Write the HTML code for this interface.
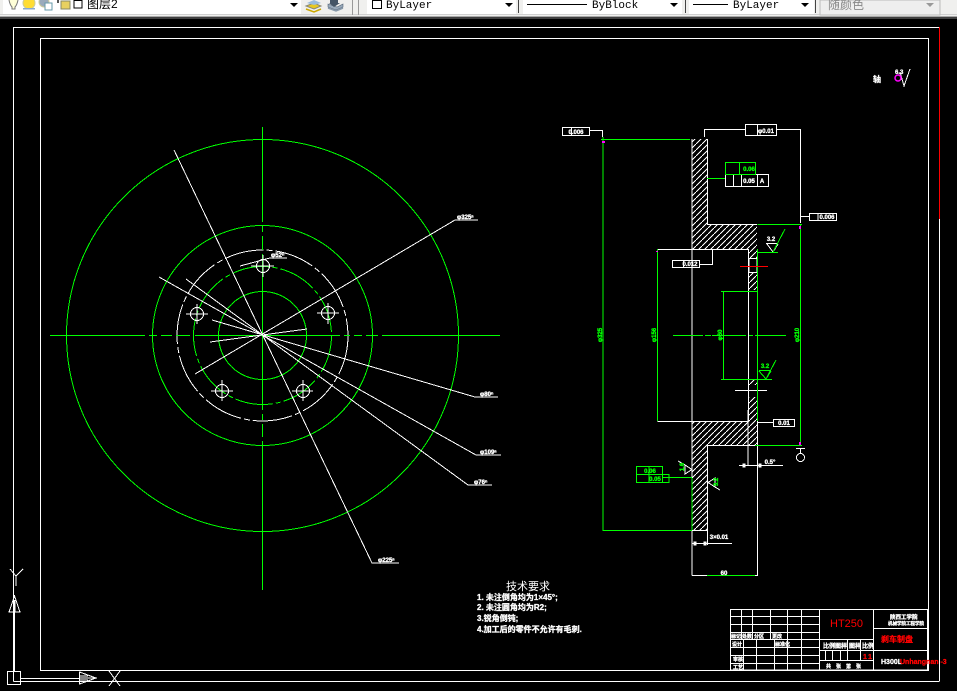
<!DOCTYPE html>
<html>
<head>
<meta charset="utf-8">
<style>
html,body{margin:0;padding:0;width:957px;height:691px;overflow:hidden;background:#000}
svg{display:block;position:absolute;left:0;top:0}
text{font-family:"Liberation Sans","Noto Sans CJK SC",sans-serif}
.m{font-family:"Liberation Mono","Noto Sans CJK SC",monospace;font-size:11px;fill:#000}
.w{stroke:#fff;fill:none}
.g{stroke:#0f0;fill:none}
.d{font-size:6px;font-weight:bold;fill:#fff;stroke:#fff;stroke-width:.35}
.dg{font-size:6px;font-weight:bold;fill:#0f0;stroke:#0f0;stroke-width:.35}
.t{font-size:6px;font-weight:bold;fill:#fff;text-anchor:middle;stroke:currentColor;stroke-width:.3;color:#fff}
.tg{font-size:6px;font-weight:bold;fill:#0f0;text-anchor:middle;stroke:#0f0;stroke-width:.3}
.k{font-weight:bold;fill:#fff;stroke:#fff;stroke-width:.3}
.r{font-weight:bold;fill:#f00;stroke:#f00;stroke-width:.3}
</style>
</head>
<body>
<svg width="957" height="691" viewBox="0 0 957 691" xmlns="http://www.w3.org/2000/svg">
<defs>
<pattern id="h" patternUnits="userSpaceOnUse" width="6" height="6">
<path d="M0 6L6 0" stroke="#fff" stroke-width="1" shape-rendering="crispEdges"/>
</pattern>
</defs>
<rect width="957" height="691" fill="#000"/>

<!-- toolbar -->
<rect width="957" height="18" fill="#f0f0ee"/>
<rect y="14" width="957" height="1" fill="#d0d0d0"/>
<rect y="16" width="957" height="1" fill="#a8a8a8"/>
<rect y="17" width="957" height="2" fill="#404040"/>
<rect x="3" y="0" width="298" height="14" fill="#fff"/>
<rect x="367" y="0" width="149" height="14" fill="#fff"/>
<rect x="523" y="0" width="159" height="14" fill="#fff"/>
<rect x="689" y="0" width="125" height="14" fill="#fff"/>
<rect x="820" y="0" width="120" height="15" fill="#eee" stroke="#bbb"/>
<rect x="352" y="0" width="1" height="15" fill="#999"/>
<rect x="358" y="0" width="1" height="15" fill="#999"/>
<rect x="518" y="0" width="1" height="13" fill="#444"/>
<rect x="685" y="0" width="1" height="13" fill="#444"/>
<rect x="815" y="0" width="1" height="13" fill="#444"/>
<path d="M9 0Q10 5 12 7L12 9L15 9L15 7Q17 5 18 0" fill="#ffffd8" stroke="#777"/>
<circle cx="29" cy="3" r="6" fill="#ffdd33" stroke="#cc9"/>
<rect x="23" y="8" width="12" height="1.500" fill="#88aacc"/>
<circle cx="44" cy="2" r="5" fill="#9ab" stroke="#cc9"/>
<rect x="45" y="3" width="7" height="7" fill="#fff" stroke="#69a"/>
<rect x="57" y="0" width="2" height="3" fill="#555"/>
<rect x="61" y="1" width="9" height="8" fill="#e8d060" stroke="#886"/>
<rect x="74" y="0.500" width="8" height="7.500" fill="#fff" stroke="#000"/>
<text x="87" y="8" font-size="12" fill="#000">图层2</text>
<path d="M290 3h8l-4 4z" fill="#000"/>
<path d="M306 6l8-3 7 3-7 3z" fill="#e8c820" stroke="#887"/>
<path d="M306 9l8 3 7-3" fill="none" stroke="#cca800" stroke-width="1.500"/>
<path d="M314 0l7 3-7 2-7-2z" fill="#9bd"/>
<path d="M328 4l9 3 6-3v3l-7 3-8-3z" fill="#9ab" stroke="#567" stroke-width=".6"/>
<path d="M330 0h8v3h2l-6 4-5-4h1z" fill="#456"/>
<path d="M328 8l8 3 7-3" fill="none" stroke="#89a" stroke-width="1.500"/>
<rect x="372.500" y="0.500" width="9" height="8" fill="#fff" stroke="#000"/>
<text class="m" x="386" y="8">ByLayer</text>
<path d="M505 3h8l-4 4z" fill="#000"/>
<rect x="527" y="4" width="60" height="1" fill="#000"/>
<text class="m" x="592" y="8">ByBlock</text>
<path d="M670 3h8l-4 4z" fill="#000"/>
<rect x="693" y="4" width="35" height="1" fill="#000"/>
<text class="m" x="733" y="8">ByLayer</text>
<path d="M801 3h8l-4 4z" fill="#000"/>
<text x="828" y="9" font-size="12" fill="#888">随颜色</text>
<path d="M926 3h8l-4 4z" fill="#999"/>

<g shape-rendering="crispEdges" stroke-width="1">
<path class="w" d="M13.500 681.500V27.500H939"/>
<path class="w" d="M13.500 681.500H939"/>
<path stroke="#f00" fill="none" d="M939.500 27V219"/>
<path stroke="#fff" fill="none" d="M939.500 219V681.500"/>
<rect class="w" x="40.500" y="38.500" width="888" height="632"/>

<circle class="g" cx="262.500" cy="335.500" r="196"/>
<circle class="g" cx="262.500" cy="335.500" r="110"/>
<circle class="w" cx="262.500" cy="335.500" r="85.500" stroke-dasharray="40 3 6 3"/>
<circle class="g" cx="262.500" cy="335.500" r="69" stroke-dasharray="38 3 5 3"/>
<circle class="g" cx="262.500" cy="335.500" r="44"/>
<path class="g" d="M50 335.500H145M149 335.500H157M161 335.500H172M176 335.500H190M195 335.500H340M344 335.500H350M354 335.500H362M366 335.500H378M382 335.500H500"/>
<path class="g" d="M262.500 127V222M262.500 226V232M262.500 236V250M262.500 254V410M262.500 414V420M262.500 424V437M262.500 441V590"/>
<g class="w">
<circle cx="263" cy="266" r="6.500"/><path d="M251 266H274M263 255V277"/>
<circle cx="328" cy="313" r="6.500"/><path d="M317 313H339M328 303V324"/>
<circle cx="197" cy="314" r="6.500"/><path d="M186 314H208M197 304V324"/>
<circle cx="222" cy="391" r="6.500"/><path d="M211 391H233M222 380V401"/>
<circle cx="303" cy="391" r="6.500"/><path d="M292 391H313M303 380V401"/>
<path d="M174 150L372 563H399"/>
<path d="M195 374L455 220H478"/>
<path d="M212 320L475 397H498"/>
<path d="M159 277L476 455H501"/>
<path d="M186 279L468 485H492"/>
<path d="M210 342L307 329"/>
<path d="M240 266L270 258H287"/>
</g>
</g>
<text class="d" x="457" y="219">φ325ⁿ</text>
<text class="d" x="480" y="396">φ80ⁿ</text>
<text class="d" x="480" y="454">φ109ⁿ</text>
<text class="d" x="474" y="484">φ76ⁿ</text>
<text class="d" x="378" y="562">φ225ⁿ</text>
<text class="d" x="271" y="257">φ52ⁿ</text>

<path fill="url(#h)" d="M692 139H707.500V224.500H757V249H692Z"/>
<path fill="url(#h)" d="M749 249H757V258H749ZM749 272H757V290H749ZM749 380H757V385H749ZM749 397H757V421H749Z"/>
<path fill="url(#h)" d="M692 421H757V445H707.500V530H692Z"/>
<rect x="692" y="249.500" width="56" height="171" fill="#000"/>

<g shape-rendering="crispEdges" stroke-width="1">
<g class="w">
<path d="M692 139V575.500"/>
<path d="M707.500 139V224.500H757"/>
<path d="M657.500 249.500H748.500V421.500H657.500"/>
<path d="M757.500 421V445.500H707.500V545"/>
<path d="M692 530.500H707"/>
<path d="M757.500 445V575.500H692"/>
<path d="M692 543.500H732"/>
<rect x="749" y="258.500" width="8" height="14"/>
<path d="M735 390.500H767"/>
<path d="M757 422.500H773"/>
<rect x="773.500" y="419.500" width="21" height="7"/>
<rect x="562.500" y="127.500" width="27" height="8"/>
<path d="M571.500 127.500V135.500"/>
<path d="M589 130.500H602.500V137"/>
<rect x="745.500" y="124.500" width="31" height="11"/>
<path d="M757.500 124.500V135.500"/>
<path d="M704.500 137V129.500H745M777 129.500H800.500V223"/>
<rect x="809.500" y="213.500" width="27" height="7"/>
<path d="M800 216.500H809M818 213.500V220.500"/>
<rect x="725.500" y="174.500" width="43" height="12"/>
<path d="M733.500 174.500V186M741.500 174.500V186M757.500 174.500V186"/>
<rect x="672.500" y="260.500" width="27" height="7"/>
<path d="M683.500 260.500V267.500M700 264.500H712.500V250"/>
<path d="M766 243.500H778M767 244L773 252L778 244"/>
<path d="M796 448.500H805M800.500 449V453"/>
<circle cx="800.500" cy="457.500" r="4"/>
<path d="M739 465.500H783M748 410V465"/>
<rect x="743" y="464" width="2" height="3" fill="#fff"/>
<rect x="759" y="464" width="2" height="3" fill="#fff"/>
<rect x="694" y="542" width="2" height="3" fill="#fff"/>
<rect x="704" y="542" width="2" height="3" fill="#fff"/>
<path d="M692 469.500L685 465V474ZM685 465L678 461"/>
<path d="M708 482.500L715 478V487ZM715 487L720 490"/>
</g>
<g class="g">
<path d="M603 137V530.500H692"/>
<path d="M601 139.500H690"/>
<path d="M757.500 224.500H802M800.500 224V445M755 445.500H802"/>
<path d="M757.500 249V421"/>
<path d="M657.500 249V421"/>
<path d="M707 178.500H725"/>
<rect x="725.500" y="162.500" width="30" height="12"/>
<path d="M739.500 162.500V174.500"/>
<path d="M773 252L785 229"/>
<path d="M757 252.500H778"/>
<path d="M723.500 291V379M721 291.500H757M721 379.500H772"/>
<path d="M766 379L776 360"/>
<path d="M759 370.500H771M759 371L766 379L771 371"/>
<path d="M673 335.500H703M705 335.500H711M712 335.500H746M749 335.500H753M755 335.500H786"/>
<path d="M707 575.500H755"/>
<rect x="636.500" y="466.500" width="26" height="16"/>
<path d="M636.500 474.500H669V482.500H662M649 466.500V482.500"/>
<path d="M663 477.500H692"/>
<path d="M692 478V530"/>
</g>
<path stroke="#f00" fill="none" d="M740 266.500H768"/>
<rect x="602" y="141" width="3" height="2" fill="#f0f"/>
<rect x="799" y="226" width="2" height="3" fill="#f0f"/>
<rect x="656" y="251" width="2" height="1" fill="#f0f"/>
<rect x="799" y="442" width="2" height="3" fill="#f0f"/>

<g class="w">
<rect x="730.500" y="609.500" width="197" height="60.500"/>
<path d="M819.500 609.500V670M873.500 609.500V670"/>
<path d="M873.500 628.500H928M873.500 650.500H928"/>
<path d="M730.500 616.500H819M730.500 624.500H819M730.500 632.500H819M730.500 639.500H873M730.500 647.500H819M730.500 655.500H819M730.500 663.500H819"/>
<path d="M741.500 609.500V639M752.500 609.500V639M770.500 609.500V639M787.500 609.500V670M801.500 609.500V670"/>
<path d="M743.500 639.500V670M756.500 639.500V670M774.500 639.500V670"/>
<path d="M819.500 650.500H873.500M819.500 660.500H873.500"/>
<path d="M847.500 639.500V660M860.500 639.500V660M825.500 650.500V660M832.500 650.500V660M840.500 650.500V660"/>
</g>

<g class="w">
<rect x="7.500" y="671.500" width="13" height="13"/>
<path d="M14.500 612V671M13.500 612V671"/>
<path d="M14.500 596L9 612H20Z"/>
<path d="M20 678.500H79M20 681.500H100"/>
<path d="M79.500 672V684L96 678Z"/>
<path d="M14 600V612M15 600V612"/>
<path d="M80 678H94M80 676H88M80 680H88"/>
<path d="M109 671L120 686M120 671L109 686"/>
<path d="M10 569L16 576L23 569M16 576V586"/>
<path d="M900 72L904 86L910 69"/>
</g>
</g>
<circle cx="898" cy="78" r="3" fill="none" stroke="#f0f" stroke-width="1.500"/>
<text class="k" x="873" y="82" font-size="8">轴</text>
<text class="k" x="895" y="74" font-size="6">6.3</text>

<text class="t" x="576" y="134" font-size="5">0.006</text>
<text class="t" x="766" y="133">φ0.01</text>
<text class="t" x="827" y="219">0.006</text>
<text class="t" x="690" y="266">0.012</text>
<text class="tg" x="749" y="171">0.06</text>
<text class="t" x="749" y="183">0.05</text>
<text class="t" x="762" y="183">A</text>
<text class="t" x="771" y="241">3.2</text>
<text class="tg" x="765" y="368">3.2</text>
<text class="t" x="784" y="425">0.01</text>
<text class="t" x="770" y="464">0.5°</text>
<text class="t" x="719" y="539">3×0.01</text>
<text class="t" x="724" y="575">60</text>
<text class="tg" x="650" y="473">0.06</text>
<text class="tg" x="655" y="481">0.05</text>
<text class="dg" transform="translate(602,335) rotate(-90)" text-anchor="middle">φ325</text>
<text class="dg" transform="translate(656,335) rotate(-90)" text-anchor="middle">φ156</text>
<text class="dg" transform="translate(722,335) rotate(-90)" text-anchor="middle">φ60</text>
<text class="dg" transform="translate(799,335) rotate(-90)" text-anchor="middle">φ210</text>
<text class="dg" transform="translate(684,467) rotate(-90)" text-anchor="middle">1.6</text>
<text class="dg" transform="translate(718,482) rotate(-90)" text-anchor="middle">3.2</text>

<text x="506" y="590" font-size="11" fill="#fff">技术要求</text>
<text class="k" x="477" y="600" font-size="8">1. 未注倒角均为1×45°;</text>
<text class="k" x="477" y="610" font-size="8">2. 未注圆角均为R2;</text>
<text class="k" x="477" y="621" font-size="8">3.锐角倒钝;</text>
<text class="k" x="477" y="632" font-size="8">4.加工后的零件不允许有毛刺.</text>

<text x="830" y="627" font-size="11" fill="#f00">HT250</text>
<text class="k" x="890" y="619" font-size="5.500">陕西工学院</text>
<text class="k" x="888" y="625" font-size="4.500">机械学院工程学院</text>
<text class="r" x="881" y="642" font-size="8">刹车制盘</text>
<text class="k" x="881" y="664" font-size="7">H300L</text>
<text class="r" x="900" y="664" font-size="7">Unhangnan -3</text>
<text class="r" x="863" y="659" font-size="7">1</text>
<text class="r" x="868" y="659" font-size="7">1</text>
<text class="k" x="823" y="648" font-size="6">比例图样</text>
<text class="k" x="849" y="648" font-size="6">图样</text>
<text class="k" x="862" y="648" font-size="6">比例</text>
<text class="k" x="826" y="668" font-size="5">共</text>
<text class="k" x="836" y="668" font-size="5">张</text>
<text class="k" x="846" y="668" font-size="5">第</text>
<text class="k" x="856" y="668" font-size="5">张</text>
<text class="k" x="731" y="638" font-size="5">标记</text>
<text class="k" x="742" y="638" font-size="5">处数</text>
<text class="k" x="754" y="638" font-size="5">分区</text>
<text class="k" x="772" y="638" font-size="5">更改</text>
<text class="k" x="732" y="646" font-size="5">设计</text>
<text class="k" x="775" y="646" font-size="5">标准化</text>
<text class="k" x="733" y="661" font-size="5">审核</text>
<text class="k" x="733" y="669" font-size="5">工艺</text>
</svg>
</body>
</html>
